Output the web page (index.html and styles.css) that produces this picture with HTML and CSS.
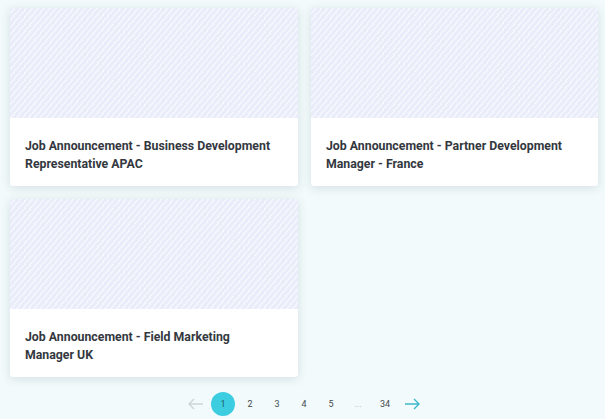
FILE: index.html
```html
<!DOCTYPE html>
<html lang="en">
<head>
  <meta charset="UTF-8">
  <title>Jobs</title>
  <link rel="stylesheet" href="styles.css">
</head>
<body>
  <div class="lista">
    <div class="tarjeta">
      <div class="imagen"></div>
      <h3>Job Announcement - Business Development Representative APAC</h3>
    </div>
    <div class="tarjeta">
      <div class="imagen"></div>
      <h3>Job Announcement - Partner Development Manager - France</h3>
    </div>
    <div class="tarjeta">
      <div class="imagen"></div>
      <h3>Job Announcement - Field Marketing Manager UK</h3>
    </div>
  </div>

  <div class="paginas">
    <span class="flecha off">
      <svg width="16" height="12" viewBox="0 0 16 12"><path d="M15 6H1M6 1L1 6l5 5" fill="none" stroke="currentColor" stroke-width="1.4"/></svg>
    </span>
    <span class="pag active">1</span>
    <span class="pag">2</span>
    <span class="pag">3</span>
    <span class="pag">4</span>
    <span class="pag">5</span>
    <span class="pag dots">...</span>
    <span class="pag">34</span>
    <span class="flecha">
      <svg width="16" height="12" viewBox="0 0 16 12"><path d="M1 6h14M10 1l5 5-5 5" fill="none" stroke="currentColor" stroke-width="1.4"/></svg>
    </span>
  </div>
</body>
</html>
```

FILE: styles.css
```css
body {
  font-family: 'Roboto', sans-serif;
  background-color: #f2fafb;
  margin: 0;
  padding: 8px 7px 0 10px;
}

.lista {
  display: grid;
  grid-template-columns: 288px 287px;
  column-gap: 13px;
  row-gap: 13px;
}

.tarjeta {
  background: #fff;
  border-radius: 3px;
  box-shadow: 0 2px 10px rgba(60, 90, 100, 0.16);
  height: 178px;
  overflow: hidden;
}

.imagen {
  height: 110px;
  background-color: #e9eef9;
  background-image: repeating-linear-gradient(130deg, #e8edf9 0, #e8edf9 3px, #f5f7fd 3px, #f5f7fd 4.5px);
}

.tarjeta h3 {
  margin: 0;
  padding: 19px 22px 0 15px;
  font-size: 12.3px;
  line-height: 18px;
  color: #333840;
  font-weight: bold;
}

.paginas {
  display: flex;
  align-items: center;
  margin-top: 15px;
  margin-left: 174px;
  font-family: 'Roboto', sans-serif;
  font-size: 9px;
  color: #444a50;
}

.pag {
  width: 24px;
  height: 24px;
  margin-right: 3px;
  display: flex;
  align-items: center;
  justify-content: center;
}

.pag.active {
  background: #3ccde0;
  border-radius: 50%;
  color: #1f5f6a;
}

.pag.dots {
  color: #b0b8bb;
}

.flecha {
  width: 24px;
  height: 24px;
  display: flex;
  align-items: center;
  justify-content: center;
  color: #3fb9cc;
}

.flecha.off {
  color: #cfd6da;
  margin-right: 3px;
}
```
